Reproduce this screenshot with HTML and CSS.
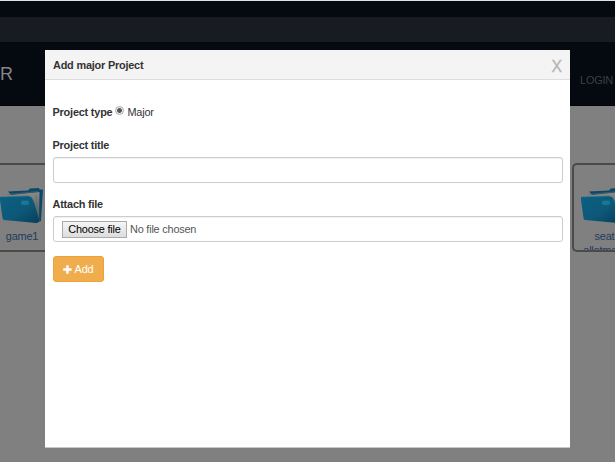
FILE: index.html
```html
<!DOCTYPE html>
<html lang="en">
<head>
<meta charset="utf-8">
<title>Add major Project</title>
<link rel="stylesheet" href="styles.css">
</head>
<body>
<svg width="0" height="0" class="defs" aria-hidden="true">
  <defs>
    <linearGradient id="front" x1="0" y1="0" x2="1" y2="1">
      <stop offset="0" stop-color="#086084"/><stop offset=".55" stop-color="#0e5878"/><stop offset="1" stop-color="#063e5c"/>
    </linearGradient>
    <linearGradient id="paper" x1="0" y1="0" x2="0" y2="1">
      <stop offset="0" stop-color="#8a8a8a"/><stop offset="1" stop-color="#4c5052"/>
    </linearGradient>
    <symbol id="folder" viewBox="0 0 46 38">
      <path d="M8 4.5 28 3.5 30 1.5 39 1 39.5 2.5 43 2.5 41 34 36 36Z" fill="#084968"/>
      <path d="M5 8.5 39.5 5 39 35 34 35Z" fill="url(#paper)"/>
      <path d="M7 7.5 38 4.5M36 8 39 34" fill="none" stroke="#666" stroke-width=".6"/>
      <path d="M0 10 28 9Q32 9 34 15L39 32Q39.5 36 36 36L4 33Q3 33 2.5 31L0 13Z" fill="url(#front)"/>
      <path d="M0 10 28 9Q32 9 34 15" fill="none" stroke="#34778c" stroke-width=".6"/>
      <rect x="21.5" y="14" width="7" height="3.5" rx="1" fill="#147897" stroke="#26849f" stroke-width=".5"/>
    </symbol>
  </defs>
</svg>
<div class="page">
  <div class="topbar"></div>
  <div class="strip"></div>
  <header class="masthead"><span class="brand">R</span><span class="login">LOGIN</span></header>
  <main class="projects">
    <div class="card card-left">
      <svg class="folder"><use href="#folder"/></svg>
      <span>game1</span>
    </div>
    <div class="card card-right">
      <svg class="folder"><use href="#folder"/></svg>
      <span>seat<br>allotment</span>
    </div>
  </main>
</div>
<section class="modal">
  <header class="modal-header"><h1>Add major Project</h1><span class="close">X</span></header>
  <form class="modal-body">
    <div class="type-row"><b>Project type</b><i class="radio"></i><span>Major</span></div>
    <b class="label label-title">Project title</b>
    <div class="field"></div>
    <b class="label label-file">Attach file</b>
    <div class="field file"><span class="choose">Choose file</span><span class="none">No file chosen</span></div>
    <div class="add"><svg viewBox="0 0 9 9"><path d="M3.2.3h2.4v3h3v2.4h-3v3H3.2v-3h-3V3.3h3z" fill="#fff"/></svg><span>Add</span></div>
  </form>
</section>
</body>
</html>
```
FILE: styles.css
```css
* { box-sizing: border-box; }
html, body { margin: 0; height: 463px; overflow: hidden; }
body { position: relative; font: 10.9px/15px "Liberation Sans", Arial, sans-serif; letter-spacing: -.2px; color: #333; }
.defs { position: absolute; }
.page { display: flex; flex-direction: column; height: 462px; background: #808080; border-top: 1px solid #dfe3e1; }
.topbar { height: 16px; background: #050910; }
.strip { height: 25px; background: #181b22; }
.masthead { display: flex; justify-content: space-between; height: 64px; background: #050910; border-bottom: 1px solid #02040a; }
.brand { margin: 20px 0 0; font-size: 18px; line-height: 24px; letter-spacing: 0; color: #858585; }
.login { margin: 31px 2px 0 0; color: #3d3f40; }
.projects { display: flex; justify-content: space-between; padding-top: 57px; }
.card { height: 89px; overflow: hidden; border: 2px solid #4a4a4a; color: #1d3c5f; text-align: center; line-height: 14px; border-radius: 5px; }
.card span { display: block; margin-top: 4px; }
.folder { display: block; width: 46px; height: 38px; }
.card-left { width: 60px; border-left: 0; padding: 22px 14px 0 0; border-radius: 0 5px 5px 0; }
.card-right { width: 43px; border-right: 0; border-radius: 5px 0 0 5px; padding: 22px 0 0 7px; }
.card-right span { width: 47px; }
.modal { position: absolute; left: 45px; top: 50px; width: 525px; height: 398px; background: #fff; border-bottom: 1px solid #c8c8c8; }
.modal-header { display: flex; justify-content: space-between; height: 30px; padding: 8px 8px 0; background: #f4f4f4; border-bottom: 1px solid #ddd; }
.modal-header h1 { margin: 0; font-size: 10.9px; line-height: 15px; }
.close { font-size: 15.75px; line-height: 17px; letter-spacing: 0; color: #b7b7b7; -webkit-text-stroke: .4px #b7b7b7; }
.modal-body { display: flex; flex-direction: column; padding: 24px 7.5px 0; }
.type-row { display: flex; height: 15px; }
.type-row b, .type-row span { margin-top: 1px; }
.radio { width: 9px; height: 9px; margin: 2px 3px 0; border: 1px solid #aaa; border-radius: 50%; background: radial-gradient(circle, #555 0 2px, #eee 2.8px); }
.label { display: block; height: 15px; }
.label-title { margin: 19px 0 4px; }
.label-file { margin: 14px 0 4px; }
.field { height: 26px; border: 1px solid #ccc; border-radius: 3px; box-shadow: inset 0 1px 1px #f1f1f1; }
.file { display: flex; align-items: center; padding-left: 8.5px; }
.choose { height: 17px; width: 65px; text-align: center; line-height: 15px; border: 1px solid #aaa; background: linear-gradient(#f5f5f5, #ddd); color: #000; }
.none { margin-left: 3px; color: #555; }
.add { display: flex; align-items: center; justify-content: center; gap: 3px; width: 51px; height: 26px; margin-top: 14px; color: #fff; background: #f0ad4e; border: 1px solid #eea236; border-radius: 3px; }
.add svg { width: 9px; height: 9px; }
```
